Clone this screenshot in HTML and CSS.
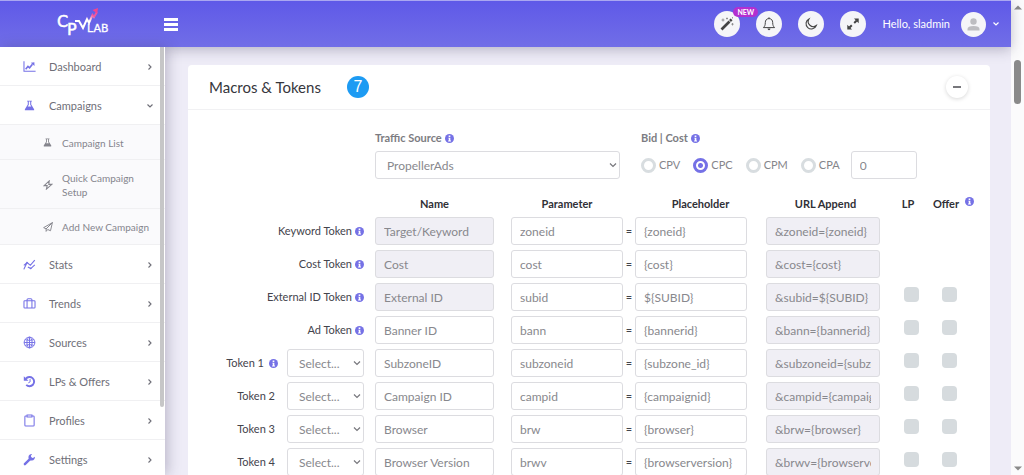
FILE: index.html
```html
<!DOCTYPE html>
<html lang="en">
<head>
<meta charset="utf-8">
<title>CPV Lab - Macros &amp; Tokens</title>
<link rel="stylesheet" href="styles.css">
</head>
<body>
<svg class="sprite" aria-hidden="true">
  <symbol id="info" viewBox="0 0 16 16"><circle cx="8" cy="8" r="8" fill="#7571e6"/><path d="M6 6.600h3.500v5h1.200v1.600H5.500v-1.600h1.200V8.200H6zM6.500 2.700h3v2.600h-3z" fill="#fff"/></symbol>
  <symbol id="right" viewBox="0 0 8 8"><path d="M2.500 1.500L5 4 2.500 6.500" fill="none" stroke="currentColor" stroke-width="1.100"/></symbol>
  <symbol id="down" viewBox="0 0 8 8"><path d="M1.500 2.500L4 5l2.500-2.500" fill="none" stroke="currentColor" stroke-width="1.200"/></symbol>
  <symbol id="flask" viewBox="0 0 16 16"><path d="M4.500 1h7v1.300h-1V6.500l4.200 6.800Q15.300 15 13.800 15H2.200Q.7 15 1.300 13.300L5.500 6.500V2.300h-1z" fill="currentColor"/><path d="M7 2.300h2v4.600l1.600 2.600H5.400L7 6.900z" fill="#fff"/></symbol>
</svg>
<div class="window">
  <div class="app">
    <header class="topbar">
      <a class="brand" href="#" aria-label="CPV Lab">
        <svg width="54" height="30" viewBox="0 0 54 30">
          <defs><linearGradient id="rise" x1="0" y1="1" x2="1" y2="0"><stop offset=".55" stop-color="#fff"/><stop offset=".8" stop-color="#f0569f"/></linearGradient></defs>
          <text class="logo-big" x="0" y="20">C</text>
          <text class="logo-big" x="10" y="28">P</text>
          <path d="M18 14h4l4 7 4-9 2 4 3.500-8 1.500 2 3-5" fill="none" stroke="url(#rise)" stroke-width="2"/>
          <path d="M35.500 3l5.500-2-.8 5.600z" fill="#f3448f"/>
          <text class="logo-small" x="30" y="25">LAB</text>
        </svg>
      </a>
      <button class="burger" aria-label="Toggle menu"><span></span><span></span><span></span></button>
      <nav class="tools" aria-label="Tools">
        <button class="round" aria-label="What's new">
          <svg width="14" height="14" viewBox="0 0 14 14"><path d="M1.500 12.500l8-8" stroke="#444" stroke-width="2.600"/><path d="M10 4l1.600-1.600" stroke="#444" stroke-width="2.600"/><path d="M3 1.500v3M1.500 3h3M7 .5v2M6 1.500h2M12.500 6v2.500M11.300 7.200h2.400M12.500 0v1.500" stroke="#777" stroke-width=".7"/></svg>
          <span class="new">NEW</span>
        </button>
        <button class="round" aria-label="Notifications">
          <svg width="14" height="14" viewBox="0 0 14 14"><path d="M7 1.600c-2.500 0-3.700 1.800-3.700 4 0 2.600-.6 3.700-1.900 5h11.200c-1.300-1.300-1.900-2.400-1.900-5 0-2.200-1.200-4-3.700-4zM7 .3v1.300" fill="none" stroke="#444"/><path d="M5.500 11.500h3q-.3 1.700-1.500 1.700t-1.500-1.700z" fill="#444"/></svg>
        </button>
        <button class="round" aria-label="Dark mode">
          <svg width="14" height="14" viewBox="0 0 14 14"><path d="M5 1.900a5.300 5.300 0 1 0 7.300 6.600A5 5 0 0 1 5 1.900z" fill="none" stroke="#444" stroke-width="1.100"/></svg>
        </button>
        <button class="round" aria-label="Full screen">
          <svg width="14" height="14" viewBox="0 0 14 14"><path d="M8 1.500h4.700v4.700zM1.300 7.800v4.700H6z" fill="#444"/><path d="M10.500 3.700L8.200 6M3.500 10.500l2.300-2.300" stroke="#444" stroke-width="2"/></svg>
        </button>
        <span class="hello">Hello, sladmin</span>
        <button class="account" aria-label="Account menu">
          <svg width="25" height="25" viewBox="0 0 25 25"><circle cx="12.500" cy="12.500" r="12.500" fill="#f5f5f8"/><circle cx="12.500" cy="9.500" r="3.200" fill="#bdbdc1"/><path d="M6.500 18.500v-1.500q0-3 6-3t6 3v1.500z" fill="#bdbdc1"/></svg>
          <svg width="8" height="8"><use href="#down"/></svg>
        </button>
      </nav>
    </header>
    <div class="body">
      <aside class="sidebar">
        <nav class="menu" aria-label="Main">
          <a class="item" href="#"><svg class="pic" viewBox="0 0 16 16"><path d="M1.200 1.500v12.300H15.500" fill="none" stroke="currentColor" stroke-width="1.300"/><path d="M3.300 11.300l2.800-3.500 2 1.800 3.500-4.300" fill="none" stroke="currentColor" stroke-width="2"/><path d="M9.600 3.500L14 2.800l.2 4.500z" fill="currentColor"/></svg><span>Dashboard</span><svg class="arrow"><use href="#right"/></svg></a>
          <a class="item" href="#"><svg class="pic"><use href="#flask" x="1" y="1" width="11" height="11"/></svg><span>Campaigns</span><svg class="arrow"><use href="#down"/></svg></a>
          <div class="submenu">
            <a class="sub" href="#"><svg class="mini"><use href="#flask" width="9" height="9"/></svg><span>Campaign List</span></a>
            <a class="sub" href="#"><svg class="mini" viewBox="0 0 16 16"><path d="M10 1.500L1.800 9h4.900L5.500 14.500 14.200 7H9.300z" fill="none" stroke="currentColor" stroke-width="1.700"/></svg><span>Quick Campaign Setup</span></a>
            <a class="sub" href="#"><svg class="mini" viewBox="0 0 16 16"><path d="M15 1L1 9l4 2zM15 1L5 11v4l2.500-3 4.500 2z" fill="none" stroke="currentColor" stroke-width="1.500"/></svg><span>Add New Campaign</span></a>
          </div>
          <a class="item" href="#"><svg class="pic" viewBox="0 0 16 16"><path d="M1 14l4-8.500L9 9l5.500-6.500M1 9l3.500-3M6 11l3.500 2 5-4.500" fill="none" stroke="currentColor" stroke-width="1.400"/><circle cx="5" cy="5.800" r="1" fill="currentColor"/><circle cx="9.500" cy="12.800" r="1" fill="currentColor"/></svg><span>Stats</span><svg class="arrow"><use href="#right"/></svg></a>
          <a class="item" href="#"><svg class="pic" viewBox="0 0 16 16"><path d="M2.200 4.500h11.600q1 0 1 1v7q0 1-1 1H2.200q-1 0-1-1v-7q0-1 1-1zM5 13.500V3.500q0-1.300 1.300-1.300h3.400Q11 2.200 11 3.500v10" fill="none" stroke="currentColor" stroke-width="1.300"/></svg><span>Trends</span><svg class="arrow"><use href="#right"/></svg></a>
          <a class="item" href="#"><svg class="pic" viewBox="0 0 16 16"><g fill="none" stroke="currentColor" stroke-width="1.200"><circle cx="8" cy="8" r="6.600"/><ellipse cx="8" cy="8" rx="3.200" ry="6.600"/><path d="M1.400 8h13.200M8 1.400v13.200M2.600 4.600q5.400 1.600 10.800 0M2.600 11.400q5.400-1.600 10.800 0"/></g></svg><span>Sources</span><svg class="arrow"><use href="#right"/></svg></a>
          <a class="item" href="#"><svg class="pic" viewBox="0 0 16 16"><path d="M3.600 4.500A5.700 5.700 0 1 1 4 12.200" fill="none" stroke="currentColor" stroke-width="2.400"/><path d="M1 1.500v5.700h5.700z" fill="currentColor"/><path d="M8.700 5v3.500L6.500 9.700" fill="none" stroke="currentColor" stroke-width="1.200"/></svg><span>LPs &amp; Offers</span><svg class="arrow"><use href="#right"/></svg></a>
          <a class="item" href="#"><svg class="pic" viewBox="0 0 16 16"><path d="M5 2.500H3.300q-1 0-1 1v10.200q0 1 1 1h9.400q1 0 1-1V3.500q0-1-1-1H11M5 1.300h6v2.500H5z" fill="none" stroke="currentColor" stroke-width="1.300"/></svg><span>Profiles</span><svg class="arrow"><use href="#right"/></svg></a>
          <a class="item" href="#"><svg class="pic" viewBox="0 0 16 16"><path d="M2.300 13.700L9.500 6.500" stroke="currentColor" stroke-width="3" stroke-linecap="round"/><path d="M14.600 4.500A4 4 0 1 1 11.200 1.300L9.700 3.500l.5 2 2 .5z" fill="currentColor"/></svg><span>Settings</span><svg class="arrow"><use href="#right"/></svg></a>
        </nav>
        <div class="side-thumb"></div>
      </aside>
      <main class="content">
        <section class="card">
          <div class="card-head">
            <h1>Macros &amp; Tokens</h1><span class="step">7</span>
            <button class="collapse" aria-label="Collapse"><span></span></button>
          </div>
          <div class="card-body">
            <div class="source">
              <div class="field">
                <label class="caption" for="source">Traffic Source <svg class="info"><use href="#info"/></svg></label>
                <select class="control" id="source"><option>PropellerAds</option></select>
              </div>
              <div class="field" role="group" aria-labelledby="bid">
                <span class="caption" id="bid">Bid | Cost <svg class="info"><use href="#info"/></svg></span>
                <div class="costs">
                  <label><input type="radio" name="cost">CPV</label>
                  <label><input type="radio" name="cost" checked>CPC</label>
                  <label><input type="radio" name="cost">CPM</label>
                  <label><input type="radio" name="cost">CPA</label>
                  <input class="control amount" type="text" value="0" aria-label="Cost amount">
                </div>
              </div>
            </div>
            <table class="tokens">
              <colgroup><col class="c-label"><col class="c-name"><col class="c-param"><col class="c-eq"><col class="c-place"><col class="c-url"><col class="c-lp"><col class="c-offer"></colgroup>
              <thead>
                <tr><td></td><th class="name">Name</th><th>Parameter</th><td></td><th>Placeholder</th><th class="append">URL Append</th><th class="flag">LP</th><th class="flag"><span class="offer">Offer<svg class="info"><use href="#info"/></svg></span></th></tr>
              </thead>
              <tbody>
                <tr>
                  <td><div class="label"><label for="n1">Keyword Token</label><svg class="info"><use href="#info"/></svg></div></td>
                  <td class="name"><input class="control" id="n1" value="Target/Keyword" disabled></td>
                  <td><input class="control" value="zoneid" aria-label="Keyword parameter"></td><td class="eq">=</td>
                  <td class="place"><input class="control" value="{zoneid}" aria-label="Keyword placeholder"></td>
                  <td class="url"><input class="control" value="&amp;zoneid={zoneid}" aria-label="Keyword URL append" disabled></td><td></td><td></td>
                </tr>
                <tr>
                  <td><div class="label"><label for="n2">Cost Token</label><svg class="info"><use href="#info"/></svg></div></td>
                  <td class="name"><input class="control" id="n2" value="Cost" disabled></td>
                  <td><input class="control" value="cost" aria-label="Cost parameter"></td><td class="eq">=</td>
                  <td class="place"><input class="control" value="{cost}" aria-label="Cost placeholder"></td>
                  <td class="url"><input class="control" value="&amp;cost={cost}" aria-label="Cost URL append" disabled></td><td></td><td></td>
                </tr>
                <tr>
                  <td><div class="label"><label for="n3">External ID Token</label><svg class="info"><use href="#info"/></svg></div></td>
                  <td class="name"><input class="control" id="n3" value="External ID" disabled></td>
                  <td><input class="control" value="subid" aria-label="External ID parameter"></td><td class="eq">=</td>
                  <td class="place"><input class="control" value="${SUBID}" aria-label="External ID placeholder"></td>
                  <td class="url"><input class="control" value="&amp;subid=${SUBID}" aria-label="External ID URL append" disabled></td>
                  <td class="tick"><input type="checkbox" aria-label="External ID LP"></td><td class="tick"><input type="checkbox" aria-label="External ID offer"></td>
                </tr>
                <tr>
                  <td><div class="label"><label for="n4">Ad Token</label><svg class="info"><use href="#info"/></svg></div></td>
                  <td class="name"><input class="control" id="n4" value="Banner ID"></td>
                  <td><input class="control" value="bann" aria-label="Ad parameter"></td><td class="eq">=</td>
                  <td class="place"><input class="control" value="{bannerid}" aria-label="Ad placeholder"></td>
                  <td class="url"><input class="control" value="&amp;bann={bannerid}" aria-label="Ad URL append" disabled></td>
                  <td class="tick"><input type="checkbox" aria-label="Ad LP"></td><td class="tick"><input type="checkbox" aria-label="Ad offer"></td>
                </tr>
                <tr>
                  <td><div class="label"><label for="n5">Token 1</label><svg class="info first"><use href="#info"/></svg><select class="control pick" aria-label="Token 1 type"><option>Select...</option></select></div></td>
                  <td class="name"><input class="control" id="n5" value="SubzoneID"></td>
                  <td><input class="control" value="subzoneid" aria-label="Token 1 parameter"></td><td class="eq">=</td>
                  <td class="place"><input class="control" value="{subzone_id}" aria-label="Token 1 placeholder"></td>
                  <td class="url"><input class="control" value="&amp;subzoneid={subzone_id}" aria-label="Token 1 URL append" disabled></td>
                  <td class="tick"><input type="checkbox" aria-label="Token 1 LP"></td><td class="tick"><input type="checkbox" aria-label="Token 1 offer"></td>
                </tr>
                <tr>
                  <td><div class="label"><label for="n6">Token 2</label><select class="control pick" aria-label="Token 2 type"><option>Select...</option></select></div></td>
                  <td class="name"><input class="control" id="n6" value="Campaign ID"></td>
                  <td><input class="control" value="campid" aria-label="Token 2 parameter"></td><td class="eq">=</td>
                  <td class="place"><input class="control" value="{campaignid}" aria-label="Token 2 placeholder"></td>
                  <td class="url"><input class="control" value="&amp;campid={campaignid}" aria-label="Token 2 URL append" disabled></td>
                  <td class="tick"><input type="checkbox" aria-label="Token 2 LP"></td><td class="tick"><input type="checkbox" aria-label="Token 2 offer"></td>
                </tr>
                <tr>
                  <td><div class="label"><label for="n7">Token 3</label><select class="control pick" aria-label="Token 3 type"><option>Select...</option></select></div></td>
                  <td class="name"><input class="control" id="n7" value="Browser"></td>
                  <td><input class="control" value="brw" aria-label="Token 3 parameter"></td><td class="eq">=</td>
                  <td class="place"><input class="control" value="{browser}" aria-label="Token 3 placeholder"></td>
                  <td class="url"><input class="control" value="&amp;brw={browser}" aria-label="Token 3 URL append" disabled></td>
                  <td class="tick"><input type="checkbox" aria-label="Token 3 LP"></td><td class="tick"><input type="checkbox" aria-label="Token 3 offer"></td>
                </tr>
                <tr>
                  <td><div class="label"><label for="n8">Token 4</label><select class="control pick" aria-label="Token 4 type"><option>Select...</option></select></div></td>
                  <td class="name"><input class="control" id="n8" value="Browser Version"></td>
                  <td><input class="control" value="brwv" aria-label="Token 4 parameter"></td><td class="eq">=</td>
                  <td class="place"><input class="control" value="{browserversion}" aria-label="Token 4 placeholder"></td>
                  <td class="url"><input class="control" value="&amp;brwv={browserversion}" aria-label="Token 4 URL append" disabled></td>
                  <td class="tick"><input type="checkbox" aria-label="Token 4 LP"></td><td class="tick"><input type="checkbox" aria-label="Token 4 offer"></td>
                </tr>
              </tbody>
            </table>
          </div>
        </section>
      </main>
    </div>
  </div>
  <div class="scrollbar" aria-hidden="true">
    <svg width="8" height="5" viewBox="0 0 8 5"><path d="M0 4.500L4 .5l4 4z" fill="#8a8a8a"/></svg>
    <span class="thumb"></span>
    <svg width="8" height="5" viewBox="0 0 8 5"><path d="M0 .5l4 4 4-4z" fill="#8a8a8a"/></svg>
  </div>
</div>
</body>
</html>
```
FILE: styles.css
```css
* { box-sizing: border-box; }
body { margin: 0; font-family: Lato, "Noto Sans", sans-serif; font-size: 11px; line-height: 16px; color: #44444c; }
button { border: 0; padding: 0; background: none; font: inherit; color: inherit; cursor: pointer; }
a { color: inherit; text-decoration: none; }
svg { display: block; flex: none; }
.sprite { position: absolute; width: 0; height: 0; }

.window { display: flex; height: 100vh; overflow: hidden; }
.app { flex: 1; min-width: 0; display: flex; flex-direction: column; }

.topbar { display: flex; align-items: center; flex: none; height: 47px; padding: 0 11px 0 57px; border-top: 1px solid #aaa7f1; background: linear-gradient(#5f59e8, #716ee7); color: #fff; box-shadow: 0 3px 12px rgba(60, 55, 90, .3); z-index: 1; }
.brand { margin-top: -4px; }
.logo-big { font: 16px "DejaVu Sans", sans-serif; fill: #fff; stroke: #fff; stroke-width: .5px; }
.logo-small { font: 11px "DejaVu Sans", sans-serif; fill: #fff; stroke: #fff; stroke-width: .3px; }
.burger { display: grid; gap: 2px; width: 14px; margin-left: 53px; }
.burger span { height: 3px; background: #fff; }
.tools { display: flex; align-items: center; gap: 16px; margin-left: auto; }
.round { position: relative; display: grid; place-items: center; width: 26px; height: 26px; border-radius: 50%; background: #f5f5f8; }
.new { position: absolute; left: 19px; top: -4px; padding: 0 4px; border-radius: 5px; background: #b32fd0; color: #fff; font-size: 7px; line-height: 10px; font-weight: 700; }
.account { display: flex; align-items: center; gap: 6px; margin-left: -5px; }

.body { flex: 1; display: flex; min-height: 0; background: #eeecf7; }
.sidebar { position: relative; flex: none; width: 165px; background: #fff; box-shadow: 3px 0 12px rgba(60, 55, 90, .28); z-index: 2; }
.menu { height: 100%; overflow: hidden; color: #6f6f78; }
.item { display: flex; align-items: center; height: 39px; padding: 1px 11px 0 23px; border-bottom: 1px solid #f0f0f2; }
.item span { flex: 1; }
.pic { width: 13px; height: 13px; margin-right: 13px; color: #7571e6; }
.arrow { width: 8px; height: 8px; }
.submenu { background: #fafafc; color: #85858d; font-size: 10px; line-height: 14px; }
.sub { display: flex; align-items: center; gap: 9px; padding: 11px 14px 9px 43px; border-bottom: 1px solid #f0f0f2; }
.sub:last-child { padding-bottom: 10px; }
.mini { width: 10px; height: 10px; }
.side-thumb { position: absolute; right: 1px; top: 0; width: 4px; height: 84%; border-radius: 0 0 2px 2px; background: #c6c6c7; }

.content { flex: 1; min-width: 0; padding: 18px 21px 0 23px; }
.card { background: #fff; border-radius: 4px; }
.card-head { display: flex; align-items: center; height: 45px; padding: 0 22px 0 21px; border-bottom: 1px solid #f1f1f3; }
h1 { margin: 0; font-size: 15px; line-height: 20px; font-weight: 400; color: #36363c; }
.step { display: grid; place-items: center; width: 22px; height: 22px; margin-left: 26px; border-radius: 50%; background: #1d9bf3; color: #fff; font: 16px "Liberation Sans", sans-serif; }
.collapse { display: grid; place-items: center; width: 22px; height: 22px; margin-left: auto; border-radius: 50%; background: #fff; box-shadow: 0 1px 4px rgba(0, 0, 0, .16); }
.collapse span { width: 8px; height: 2px; background: #77777c; }
.card-body { padding: 20px 21px; }
.source { display: grid; grid-template-columns: 245fr 328fr; gap: 21px; padding-left: 166px; color: #85858a; }
.field { display: grid; gap: 5px; }
.caption { display: flex; align-items: center; gap: 3px; font-weight: 700; color: #7c7c82; font-size: 11px; }
.info { width: 9px; height: 9px; }
.control { display: block; width: 100%; min-width: 0; height: 28px; padding: 0 8px; border: 1px solid #dcdce0; border-radius: 3px; background: #fff; color: #88888d; font: 12px Lato, "Noto Sans", sans-serif; }
.control:disabled { background: #f0eff5; opacity: 1; }
select.control { appearance: none; padding: 0 20px 0 11px; background: #fff url("data:image/svg+xml,%3Csvg xmlns='http://www.w3.org/2000/svg' width='8' height='8'%3E%3Cpath d='M1 2.500l3 3 3-3' fill='none' stroke='%2377777c' stroke-width='1.200'/%3E%3C/svg%3E") no-repeat right 2px center; }
.costs { display: flex; align-items: center; gap: 13px; }
.costs label { display: flex; align-items: center; gap: 3px; }
.costs input[type=radio] { appearance: none; width: 15px; height: 15px; margin: 0; border: 3px solid #d8dde0; border-radius: 50%; }
.costs input[type=radio]:checked { border-color: #7571e6; background: radial-gradient(circle, #7571e6 2px, #fff 3px); }
.costs .amount { width: 66px; margin-left: -2px; }

.tokens { width: 100%; margin-top: 12px; table-layout: fixed; border-collapse: collapse; }
.tokens th, .tokens td { padding: 0; }
.tokens th { height: 26px; color: #303036; font-weight: 700; font-size: 11px; }
.tokens tbody td { padding-bottom: 5px; }
.c-label { width: 166px; } .c-name { width: 136px; } .c-param { width: 112px; } .c-eq { width: 12px; }
.c-place { width: 131px; } .c-url { width: 127px; } .c-lp { width: 36px; } .c-offer { width: 40px; }
.tokens .name { padding-right: 17px; }
.tokens .place { padding-right: 19px; }
.tokens .url { padding-right: 13px; }
.tokens .append { padding-right: 8px; }
.tokens .flag { padding-right: 6px; }
.eq { text-align: center; }
.label { display: flex; align-items: center; justify-content: flex-end; gap: 3px; color: #44444c; }
.label > .info:last-child { margin-right: 11px; }
.pick { flex: none; }
select.pick { width: 77px; margin: 0 11px 0 9px; }
.label > .first { margin: 0 -3px 0 2px; }
.tokens tbody .tick { padding-bottom: 10px; }
.tick input { appearance: none; display: block; width: 15px; height: 15px; margin: 0 auto; border-radius: 4px; background: #d6dbde; }
.offer { position: relative; }
.offer .info { position: absolute; left: 100%; top: 0; margin-left: 6px; }

.scrollbar { display: flex; flex-direction: column; align-items: center; flex: none; width: 13px; padding: 5px 0 4px; background: #fbfbfc; }
.thumb { width: 7px; height: 44px; margin: 50px 0 auto; border-radius: 4px; background: #8a8a8a; }
```
